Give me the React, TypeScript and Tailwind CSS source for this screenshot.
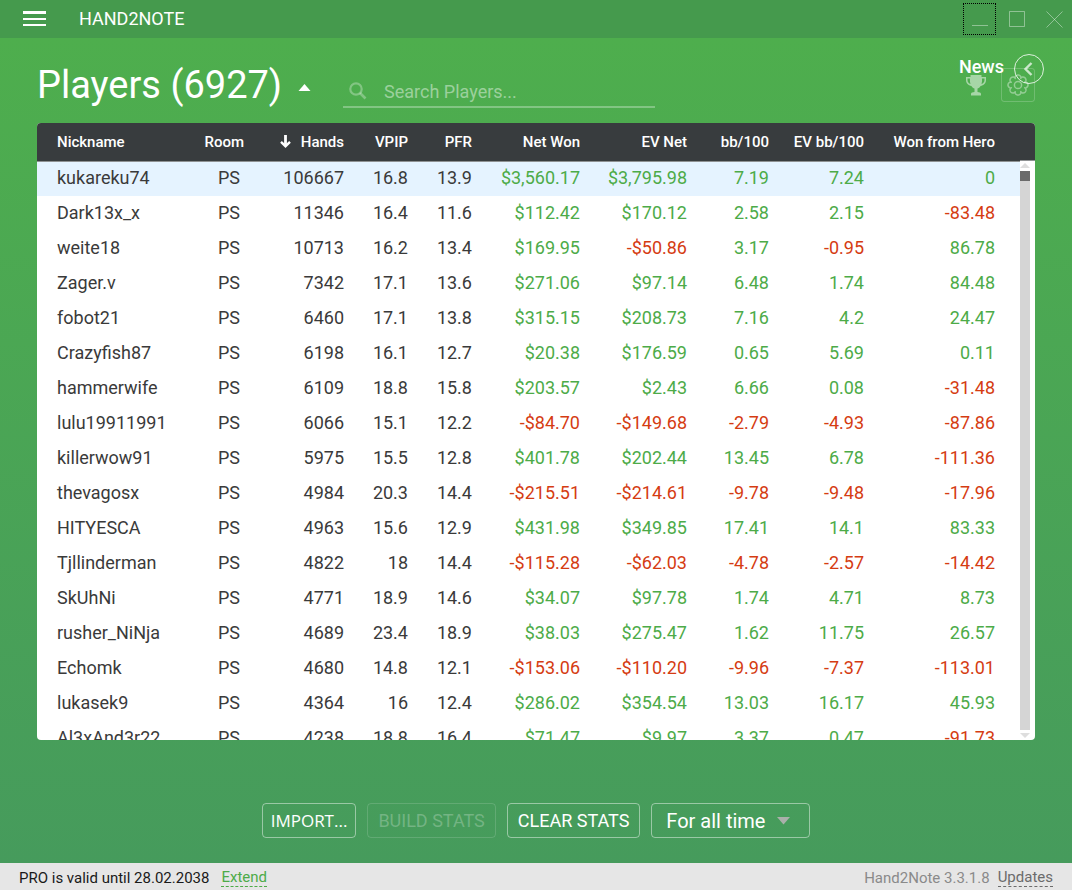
import { useState } from 'react';

type Player = {
  name: string;
  hands: string;
  vpip: string;
  pfr: string;
  // Net Won, EV Net, bb/100, EV bb/100, Won from Hero
  results: string[];
};

const players: Player[] = [
  { name: 'kukareku74', hands: '106667', vpip: '16.8', pfr: '13.9', results: ['$3,560.17', '$3,795.98', '7.19', '7.24', '0'] },
  { name: 'Dark13x_x', hands: '11346', vpip: '16.4', pfr: '11.6', results: ['$112.42', '$170.12', '2.58', '2.15', '-83.48'] },
  { name: 'weite18', hands: '10713', vpip: '16.2', pfr: '13.4', results: ['$169.95', '-$50.86', '3.17', '-0.95', '86.78'] },
  { name: 'Zager.v', hands: '7342', vpip: '17.1', pfr: '13.6', results: ['$271.06', '$97.14', '6.48', '1.74', '84.48'] },
  { name: 'fobot21', hands: '6460', vpip: '17.1', pfr: '13.8', results: ['$315.15', '$208.73', '7.16', '4.2', '24.47'] },
  { name: 'Crazyfish87', hands: '6198', vpip: '16.1', pfr: '12.7', results: ['$20.38', '$176.59', '0.65', '5.69', '0.11'] },
  { name: 'hammerwife', hands: '6109', vpip: '18.8', pfr: '15.8', results: ['$203.57', '$2.43', '6.66', '0.08', '-31.48'] },
  { name: 'lulu19911991', hands: '6066', vpip: '15.1', pfr: '12.2', results: ['-$84.70', '-$149.68', '-2.79', '-4.93', '-87.86'] },
  { name: 'killerwow91', hands: '5975', vpip: '15.5', pfr: '12.8', results: ['$401.78', '$202.44', '13.45', '6.78', '-111.36'] },
  { name: 'thevagosx', hands: '4984', vpip: '20.3', pfr: '14.4', results: ['-$215.51', '-$214.61', '-9.78', '-9.48', '-17.96'] },
  { name: 'HITYESCA', hands: '4963', vpip: '15.6', pfr: '12.9', results: ['$431.98', '$349.85', '17.41', '14.1', '83.33'] },
  { name: 'Tjllinderman', hands: '4822', vpip: '18', pfr: '14.4', results: ['-$115.28', '-$62.03', '-4.78', '-2.57', '-14.42'] },
  { name: 'SkUhNi', hands: '4771', vpip: '18.9', pfr: '14.6', results: ['$34.07', '$97.78', '1.74', '4.71', '8.73'] },
  { name: 'rusher_NiNja', hands: '4689', vpip: '23.4', pfr: '18.9', results: ['$38.03', '$275.47', '1.62', '11.75', '26.57'] },
  { name: 'Echomk', hands: '4680', vpip: '14.8', pfr: '12.1', results: ['-$153.06', '-$110.20', '-9.96', '-7.37', '-113.01'] },
  { name: 'lukasek9', hands: '4364', vpip: '16', pfr: '12.4', results: ['$286.02', '$354.54', '13.03', '16.17', '45.93'] },
  { name: 'Al3xAnd3r22', hands: '4238', vpip: '18.8', pfr: '16.4', results: ['$71.47', '$9.97', '3.37', '0.47', '-91.73'] },
];

// Outline of the eight-lobed cog, centred in a 24x24 box
const cogPoints = Array.from({ length: 160 }, (_, i) => {
  const angle = (i / 160) * Math.PI * 2;
  const radius = 7.2 + 2.8 * Math.sqrt(Math.abs(Math.cos(4 * angle)));
  return `${(12 + radius * Math.sin(angle)).toFixed(2)},${(12 - radius * Math.cos(angle)).toFixed(2)}`;
}).join(' ');

function TitleBar() {
  return (
    <header className="flex h-[38px] shrink-0 items-center bg-[#459a4d] pr-0.5 pl-[23px] text-white">
      <button aria-label="Menu">
        <svg width="23" height="16" viewBox="0 0 23 16" fill="currentColor" shapeRendering="crispEdges">
          <rect width="23" height="3" y="0" />
          <rect width="23" height="2" y="7" />
          <rect width="23" height="2" y="13" />
        </svg>
      </button>
      <span className="ml-[33px] flex-1 text-[18px] leading-6">HAND2NOTE</span>
      <div className="flex items-center text-white/40">
        <button aria-label="Minimize" className="flex h-8 w-[33px] items-center justify-center border border-dotted border-black">
          <svg width="16" height="16" viewBox="0 0 16 16" stroke="currentColor">
            <path d="M0 14.5h16" />
          </svg>
        </button>
        <button aria-label="Maximize" className="flex h-8 w-[42px] items-center justify-center">
          <svg width="16" height="16" viewBox="0 0 16 16" fill="none" stroke="currentColor">
            <path d="M.5 .5h15v15h-15z" />
          </svg>
        </button>
        <button aria-label="Close" className="flex h-8 w-8 items-center justify-center">
          <svg width="17" height="17" viewBox="0 0 17 17" stroke="currentColor">
            <path d="M.5 .5l16 16M16.5 .5l-16 16" />
          </svg>
        </button>
      </div>
    </header>
  );
}

function PageHeader() {
  const [search, setSearch] = useState('');

  return (
    <div className="relative flex h-[85px] shrink-0 items-start px-[37px] text-white">
      <h1 className="pt-6 text-[38px] leading-[46px]">Players (6927)</h1>
      <button aria-label="Collapse" className="mt-[46px] ml-4">
        <svg width="13" height="7" viewBox="0 0 13 7" fill="currentColor">
          <path d="M6.5 0L12.5 7H.5z" />
        </svg>
      </button>
      <label className="mt-[38px] ml-8 flex h-8 w-[312px] items-center border-b-2 border-white/30">
        <svg className="ml-1.5 text-white/30" width="18" height="18" viewBox="0 0 18 18" fill="none" stroke="currentColor">
          <circle cx="7" cy="7" r="5.7" strokeWidth="2.2" />
          <path d="M11 11l5.5 5.5" strokeWidth="2.6" />
        </svg>
        <input
          type="text"
          aria-label="Search players"
          placeholder="Search Players..."
          value={search}
          onChange={(e) => setSearch(e.target.value)}
          className="ml-[17px] min-w-0 flex-1 bg-transparent pt-0.5 text-[18px] leading-6 outline-none placeholder:text-white/45"
        />
      </label>
      <div className="flex-1" />
      <button aria-label="Achievements" className="mt-[37px] mr-[15px] text-white/50">
        <svg width="20" height="21" viewBox="0 0 20 21" fill="currentColor">
          <path d="M4.500 0h11v2H20v3c0 3.200-2.400 5.500-5.400 5.900-.9 1.500-2 2.400-3.100 2.700V17c1.900.1 3.500.6 3.500 2v1.500H5V19c0-1.400 1.600-1.900 3.500-2v-3.400c-1.100-.3-2.200-1.200-3.100-2.700C2.400 10.500 0 8.200 0 5V2h4.500zM1.500 3.500V5c0 2 1.200 3.500 3 4.100C4 7.500 3.800 5.500 4 3.500zM16 3.500c.2 2 0 4-.5 5.600 1.800-.6 3-2.100 3-4.100V3.500z" fillRule="evenodd" />
        </svg>
      </button>
      <button aria-label="Settings" className="mt-[30px] flex h-[34px] w-[34px] items-center justify-center rounded-[3px] border border-white/20 text-white/40">
        <svg className="shrink-0" width="24" height="24" viewBox="0 0 24 24" fill="none" stroke="currentColor" strokeWidth="1.5" strokeLinejoin="round">
          <polygon points={cogPoints} />
          <circle cx="12" cy="12" r="3.6" />
        </svg>
      </button>
      {/* News tab slides over the toolbar icons */}
      <div className="absolute top-4 right-7 flex items-center gap-2.5">
        <span className="pb-1 text-[18px] leading-6 font-medium">News</span>
        <button aria-label="Show news" className="flex h-[30px] w-[30px] items-center justify-center rounded-full border border-white/80 text-white/70">
          <svg width="14" height="14" viewBox="0 0 14 14" fill="none" stroke="currentColor" strokeWidth="2.4">
            <path d="M9.500 1L3.500 7l6 6" />
          </svg>
        </button>
      </div>
    </div>
  );
}

function PlayersTable() {
  return (
    <div className="mx-[37px] flex min-h-0 flex-1 overflow-hidden rounded-[4px] bg-white">
      <div className="min-w-0 flex-1">
        <table className="w-full table-fixed text-right whitespace-nowrap">
          <colgroup>
            <col />
            <col className="w-16" />
            <col className="w-[100px]" />
            <col className="w-16" />
            <col className="w-16" />
            <col className="w-[108px]" />
            <col className="w-[107px]" />
            <col className="w-[82px]" />
            <col className="w-[95px]" />
            <col className="w-[156px]" />
          </colgroup>
          <thead>
            <tr className="h-[38px] border-b border-[#8f9293] bg-[#383c3e] text-[15px] text-white">
              <th className="pl-5 text-left font-medium">Nickname</th>
              <th className="font-medium">Room</th>
              <th className="font-medium">
                <svg className="mr-2.5 inline-block align-[-1px]" width="11" height="13" viewBox="0 0 11 13" fill="none" stroke="currentColor">
                  <path d="M5.500 0v11" strokeWidth="2.800" />
                  <path d="M1 6.800l4.500 4.400L10 6.800" strokeWidth="2.400" />
                </svg>
                Hands
              </th>
              <th className="font-medium">VPIP</th>
              <th className="font-medium">PFR</th>
              <th className="font-medium">Net Won</th>
              <th className="font-medium">EV Net</th>
              <th className="font-medium">bb/100</th>
              <th className="font-medium">EV bb/100</th>
              <th className="pr-[25px] font-medium">Won from Hero</th>
            </tr>
          </thead>
          <tbody className="text-[18px] leading-6 text-[#3a3a3a]">
            {players.map((player, index) => (
              <tr key={player.name} className={index === 0 ? 'h-[35px] bg-[#e5f3ff]' : 'h-[35px]'}>
                <td className="pb-0.5 pl-5 text-left">{player.name}</td>
                <td className="pr-1 pb-0.5">PS</td>
                <td className="pb-0.5">{player.hands}</td>
                <td className="pb-0.5">{player.vpip}</td>
                <td className="pb-0.5">{player.pfr}</td>
                {player.results.map((value, i) => (
                  <td
                    key={i}
                    className={`pb-0.5 ${value.startsWith('-') ? 'text-[#d53c12]' : 'text-[#4dab48]'} ${i === 4 ? 'pr-[25px]' : ''}`}
                  >
                    {value}
                  </td>
                ))}
              </tr>
            ))}
          </tbody>
        </table>
      </div>

      {/* Scrollbar */}
      <div className="flex w-[15px] flex-col">
        <div className="h-[38px] shrink-0 border-b border-[#8f9293] bg-[#383c3e]" />
        <svg className="mt-0.5 mb-[3px] shrink-0" width="10" height="5" viewBox="0 0 10 5" fill="#dedede">
          <path d="M5 0l5 5H0z" />
        </svg>
        <div className="w-2.5 flex-1 bg-[#d5d5d5]">
          <div className="h-2.5 bg-[#6b6b6b]" />
        </div>
        <svg className="mt-[3px] mb-0.5 shrink-0" width="10" height="5" viewBox="0 0 10 5" fill="#dedede">
          <path d="M0 0h10L5 5z" />
        </svg>
      </div>
    </div>
  );
}

function Actions() {
  const [period, setPeriod] = useState('all');

  return (
    <div className="mt-[63px] mb-[25px] flex shrink-0 justify-center gap-[11px] text-white">
      <button className="h-[35px] rounded-[4px] border border-white/45 px-2 font-['Open_Sans',sans-serif] text-[17px]">
        IMPORT...
      </button>
      <button disabled className="h-[35px] rounded-[4px] border border-white/15 px-2.5 text-[18px] text-white/25">
        BUILD STATS
      </button>
      <button className="h-[35px] rounded-[4px] border border-white/45 px-2.5 text-[18px]">CLEAR STATS</button>
      <div className="relative">
        <select
          aria-label="Period"
          value={period}
          onChange={(e) => setPeriod(e.target.value)}
          className="h-[35px] w-[159px] appearance-none rounded-[4px] border border-white/45 bg-transparent pl-3.5 text-[20px] outline-none"
        >
          <option value="all">For all time</option>
        </select>
        <svg className="pointer-events-none absolute top-3.5 right-5" width="13" height="8" viewBox="0 0 13 8" fill="#aab0aa">
          <path d="M0 0h13L6.5 7.5z" />
        </svg>
      </div>
    </div>
  );
}

function StatusBar() {
  return (
    <footer className="flex h-[27px] shrink-0 items-center bg-[#e6e6e6] px-[19px] pt-[3px] text-[15px] leading-[17px]">
      <span className="text-[#1a1a1a]">PRO is valid until 28.02.2038</span>
      <a href="#extend" className="ml-3 border-b border-dashed border-[#4dab48] text-[#4dab48]">
        Extend
      </a>
      <span className="ml-auto text-[#8a8a8a]">Hand2Note 3.3.1.8</span>
      <a href="#updates" className="ml-2 border-b border-dashed border-[#6b6b6b] text-[#6b6b6b]">
        Updates
      </a>
    </footer>
  );
}

export default function App() {
  return (
    <div className="flex h-screen flex-col bg-[#459a4d] font-['Roboto',sans-serif]">
      <TitleBar />
      <main className="flex min-h-0 flex-1 flex-col bg-linear-to-b from-[#4eae4d] to-[#469b5c]">
        <PageHeader />
        <PlayersTable />
        <Actions />
      </main>
      <StatusBar />
    </div>
  );
}
